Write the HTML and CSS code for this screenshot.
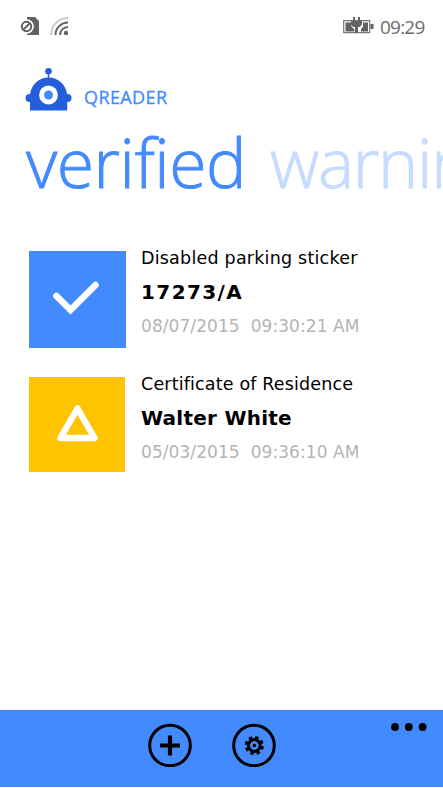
FILE: index.html
```html
<!DOCTYPE html>
<html lang="en">
<head>
<meta charset="utf-8">
<title>QReader</title>
<link rel="stylesheet" href="styles.css">
</head>
<body>
<div class="phone">
  <header class="status">
    <svg class="status-left" width="52" height="22" viewBox="0 0 52 22">
      <path d="M7 1h8l4 4v14H7z" fill="#626262"/>
      <circle cx="6.500" cy="10.500" r="7.300" fill="#fff"/>
      <circle cx="6.500" cy="10.500" r="4.700" fill="none" stroke="#626262" stroke-width="2"/>
      <path d="M3.500 13.500l6-6" stroke="#626262" stroke-width="2"/>
      <g fill="none" stroke-width="2">
        <path d="M31 19A17 17 0 0 1 48 2" stroke="#ccc"/>
        <path d="M35.500 19A12.500 12.500 0 0 1 48 6.500M40 19A8 8 0 0 1 48 11" stroke="#626262"/>
      </g>
      <circle cx="46" cy="17" r="2.200" fill="#626262"/>
    </svg>
    <svg class="battery" width="32" height="19" viewBox="0 0 32 19">
      <path d="M.7 4.700h26v12H.7z" fill="#fff" stroke="#777" stroke-width="1.200"/>
      <path d="M2.500 6.500h6v4l3 3v2h-9zM18 13.500l2-3v-4h5v9h-7zM27.500 8h3v5h-3z" fill="#626262"/>
      <path d="M10 1h2v4h3V1h2v4h2v3l-2 3h-2v6h-3v-6h-2L8 8V5h2z" fill="#626262"/>
    </svg>
    <span class="clock">09:29</span>
  </header>
  <div class="brand">
    <svg width="48" height="45" viewBox="0 0 48 45" fill="#245edc">
      <circle cx="23.500" cy="4.200" r="3.300"/>
      <path d="M22.700 5h1.600v8h-1.600z"/>
      <path d="M5 28C6 17 14 10.500 23.500 10.500S41 17 42.200 28z"/>
      <rect x=".5" y="27" width="46" height="8" rx="4"/>
      <path d="M5 27h37.200v16.500H5z"/>
      <circle cx="23.500" cy="28" r="9.400" fill="#fff"/>
      <circle cx="23.500" cy="28" r="4.500" fill="#448aff"/>
    </svg>
    <span class="brand-name">QREADER</span>
  </div>
  <nav class="pivot"><span class="active">verified</span><span class="next">warnings</span></nav>
  <main class="list">
    <article class="item">
      <div class="tile verified">
        <svg width="97" height="97" viewBox="0 0 97 97"><path d="M27.500 45L41.500 59 66.500 34" fill="none" stroke="#fff" stroke-width="6.500" stroke-linecap="round"/></svg>
      </div>
      <div class="details">
        <span class="kind">Disabled parking sticker</span>
        <strong class="name code">17273/A</strong>
        <span class="date">08/07/2015&nbsp; 09:30:21 AM</span>
      </div>
    </article>
    <article class="item">
      <div class="tile warning">
        <svg width="96" height="96" viewBox="0 0 96 96"><path d="M48.500 31.500L65.500 61H31.500z" fill="none" stroke="#fff" stroke-width="6.500" stroke-linejoin="round"/></svg>
      </div>
      <div class="details">
        <span class="kind residence">Certificate of Residence</span>
        <strong class="name">Walter White</strong>
        <span class="date">05/03/2015&nbsp; 09:36:10 AM</span>
      </div>
    </article>
  </main>
  <footer class="appbar">
    <svg width="44" height="44" viewBox="0 0 44 44"><circle cx="22" cy="22.500" r="20.300" fill="none" stroke="#000" stroke-width="3"/><path d="M22 12.500v20M12 22.500h20" stroke="#000" stroke-width="4.200"/></svg>
    <svg width="44" height="44" viewBox="0 0 44 44">
      <circle cx="22" cy="22.500" r="20.300" fill="none" stroke="#000" stroke-width="3"/>
      <circle cx="22.300" cy="22.500" r="5.900" fill="none" stroke="#000" stroke-width="3"/>
      <circle cx="22.300" cy="22.500" r="8" fill="none" stroke="#000" stroke-width="3.200" stroke-dasharray="3.400 2.883" transform="rotate(4 22.300 22.500)"/>
      <circle cx="22.300" cy="22.500" r="1.800"/>
    </svg>
    <svg class="more" width="38" height="10" viewBox="0 0 38 10"><circle cx="5" cy="5" r="3.900"/><circle cx="18.800" cy="5" r="3.900"/><circle cx="32.600" cy="5" r="3.900"/></svg>
  </footer>
</div>
</body>
</html>
```
FILE: styles.css
```css
body {
  margin: 0;
  background: #fff;
}

.phone {
  width: 443px;
  height: 788px;
  box-sizing: border-box;
  padding-bottom: 1px;
  display: flex;
  flex-direction: column;
  overflow: hidden;
  font-family: "DejaVu Sans", sans-serif;
}

.phone svg {
  display: block;
  flex: none;
}

.status {
  height: 51px;
  box-sizing: border-box;
  padding: 16px 0 0 20px;
  display: flex;
  align-items: flex-start;
}

.battery {
  margin-left: 271px;
}

.clock {
  margin-left: 5px;
  font: 19px/22px "Open Sans", sans-serif;
  letter-spacing: -0.8px;
  color: #6b6b6b;
}

.brand {
  height: 62px;
  box-sizing: border-box;
  padding: 16px 0 0 25px;
  display: flex;
}

.brand-name {
  margin: 18px 0 0 11px;
  font: 18px/24px "Open Sans", sans-serif;
  letter-spacing: 0.4px;
  -webkit-text-stroke: 0.3px;
  color: #448aff;
}

.pivot {
  height: 138px;
  padding-left: 26px;
  display: flex;
  gap: 24px;
  white-space: nowrap;
  font: 300 68px/98px "Open Sans", sans-serif;
  -webkit-text-stroke: 0.9px;
}

.active {
  letter-spacing: -0.5px;
  color: #448aff;
}

.next {
  letter-spacing: -1.2px;
  color: #c5dbff;
}

.list {
  flex: 1;
  padding-left: 29px;
  display: flex;
  flex-direction: column;
  gap: 29px;
}

.item {
  height: 97px;
  display: flex;
}

.tile.verified {
  width: 97px;
  height: 97px;
  margin-right: 15px;
  background: #448aff;
}

.tile.warning {
  width: 96px;
  height: 95px;
  margin-right: 16px;
  background: #ffc400;
}

.details {
  display: flex;
  flex-direction: column;
  white-space: nowrap;
  margin-top: -5px;
}

.kind {
  font-size: 17.5px;
  line-height: 24px;
  letter-spacing: 0.22px;
}

.kind.residence {
  letter-spacing: 0.16px;
}

.name {
  margin-top: 8px;
  font-size: 20px;
  line-height: 28px;
  letter-spacing: 0.25px;
}

.name.code {
  letter-spacing: 1.4px;
}

.date {
  margin-top: 8px;
  font-size: 17px;
  line-height: 24px;
  letter-spacing: 0.07px;
  color: #b4b4b4;
}

.appbar {
  position: relative;
  height: 77px;
  box-sizing: border-box;
  padding: 13px 0 0 148px;
  display: flex;
  gap: 40px;
  background: #448aff;
}

.more {
  position: absolute;
  right: 15px;
  top: 12px;
}
```
